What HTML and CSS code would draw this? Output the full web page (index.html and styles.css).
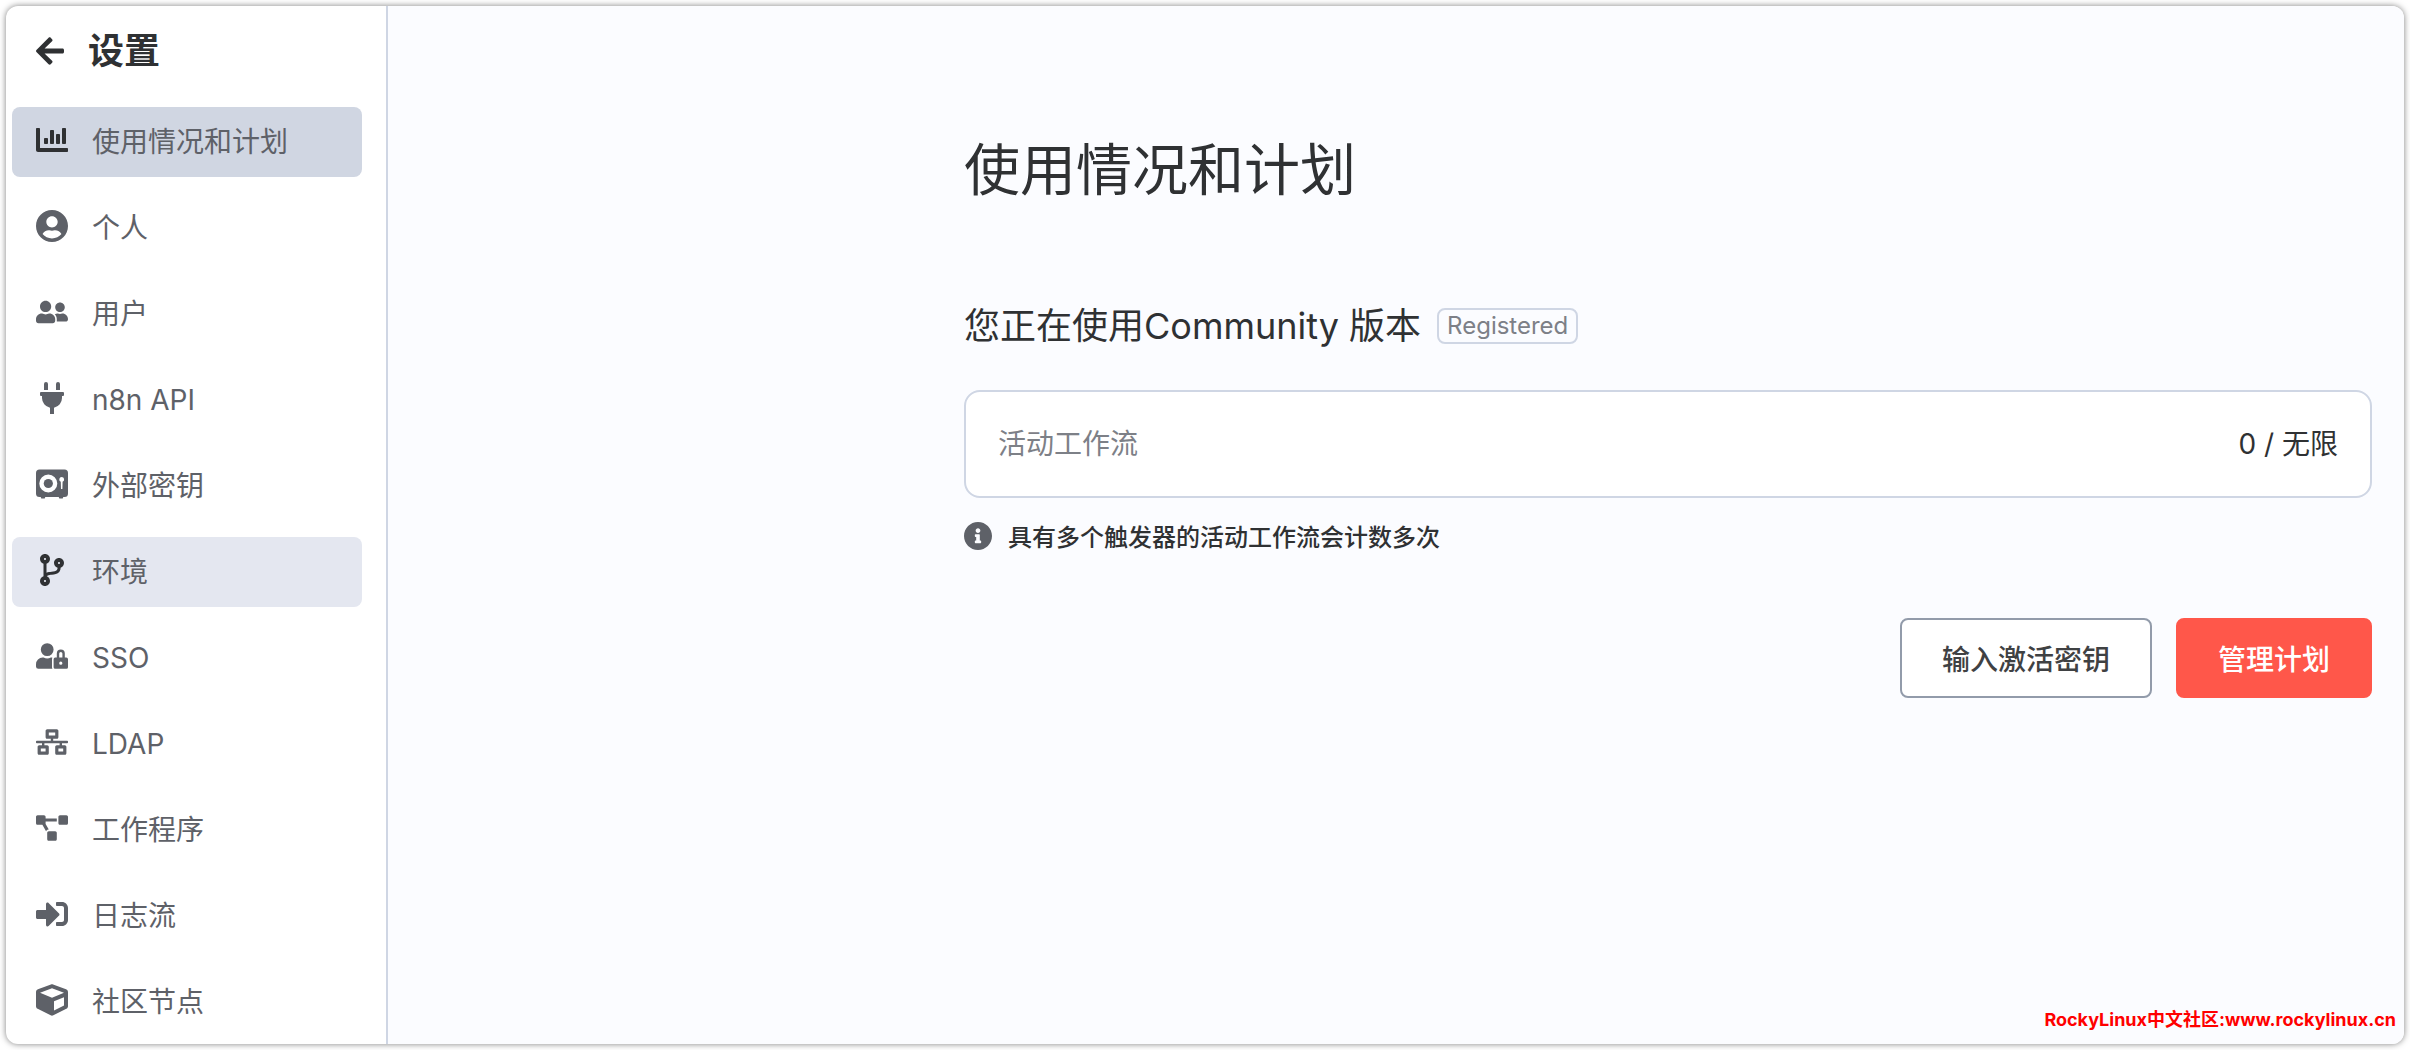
FILE: index.html
```html
<!DOCTYPE html>
<html lang="zh-CN">
<head>
  <meta charset="utf-8">
  <meta name="viewport" content="width=device-width, initial-scale=1">
  <title>设置 - 使用情况和计划</title>
  <link rel="stylesheet" href="styles.css">
</head>
<body>
  <div class="app">
    <aside class="sidebar">
      <a class="back" href="#">
        <svg class="back-icon" viewBox="0 32 448 448" aria-hidden="true"><path d="M257.5 445.1l-22.2 22.2c-9.4 9.4-24.6 9.4-33.9 0L7 273c-9.4-9.4-9.4-24.6 0-33.9L201.4 44.7c9.4-9.4 24.6-9.4 33.9 0l22.2 22.2c9.5 9.5 9.3 25-.4 34.3L136.6 216H424c13.3 0 24 10.7 24 24v32c0 13.3-10.7 24-24 24H136.6l120.5 114.8c9.8 9.3 10 24.8.4 34.3z"/></svg>
        <span class="back-title">设置</span>
      </a>
      <nav class="menu">
        <a class="menu-item is-active" href="#">
          <svg class="menu-icon" viewBox="0 0 512 512" aria-hidden="true"><path d="M332.8 320h38.4c6.4 0 12.8-6.4 12.8-12.8V172.8c0-6.4-6.4-12.8-12.8-12.8h-38.4c-6.4 0-12.8 6.4-12.8 12.8v134.4c0 6.4 6.4 12.8 12.8 12.8zm96 0h38.4c6.4 0 12.8-6.4 12.8-12.8V76.8c0-6.4-6.4-12.8-12.8-12.8h-38.4c-6.4 0-12.8 6.4-12.8 12.8v230.4c0 6.4 6.4 12.8 12.8 12.8zm-288 0h38.4c6.4 0 12.8-6.4 12.8-12.8v-70.4c0-6.4-6.4-12.8-12.8-12.8h-38.4c-6.4 0-12.8 6.4-12.8 12.8v70.4c0 6.4 6.4 12.8 12.8 12.8zm96 0h38.4c6.4 0 12.8-6.4 12.8-12.8V108.8c0-6.4-6.4-12.8-12.8-12.8h-38.4c-6.4 0-12.8 6.4-12.8 12.8v198.4c0 6.4 6.4 12.8 12.8 12.8zM496 384H64V80c0-8.84-7.16-16-16-16H16C7.16 64 0 71.16 0 80v336c0 17.67 14.33 32 32 32h464c8.84 0 16-7.16 16-16v-32c0-8.84-7.16-16-16-16z"/></svg>
          <span>使用情况和计划</span>
        </a>
        <a class="menu-item" href="#">
          <svg class="menu-icon" viewBox="0 8 496 496" aria-hidden="true"><path d="M248 8C111 8 0 119 0 256s111 248 248 248 248-111 248-248S385 8 248 8zm0 96c48.600 0 88 39.400 88 88s-39.400 88-88 88-88-39.400-88-88 39.400-88 88-88zm0 344c-58.700 0-111.300-26.600-146.500-68.200 18.800-35.400 55.600-59.800 98.500-59.800 2.400 0 4.800.4 7.100 1.100 13 4.200 26.600 6.900 40.900 6.900 14.300 0 28-2.700 40.900-6.900 2.300-.7 4.700-1.100 7.100-1.100 42.900 0 79.700 24.400 98.500 59.800C359.300 421.400 306.700 448 248 448z"/></svg>
          <span>个人</span>
        </a>
        <a class="menu-item" href="#">
          <svg class="menu-icon" viewBox="0 0 640 512" aria-hidden="true"><path d="M192 256c61.9 0 112-50.1 112-112S253.9 32 192 32 80 82.1 80 144s50.1 112 112 112zm76.800 32h-8.300c-20.800 10-43.900 16-68.500 16s-47.600-6-68.500-16h-8.300C51.600 288 0 339.600 0 403.200V432c0 26.500 21.500 48 48 48h288c26.500 0 48-21.500 48-48v-28.800c0-63.600-51.600-115.200-115.200-115.200zM480 256c53 0 96-43 96-96s-43-96-96-96-96 43-96 96 43 96 96 96zm48 32h-3.800c-13.900 4.800-28.600 8-44.200 8s-30.300-3.200-44.200-8H432c-20.400 0-39.200 5.900-55.700 15.400 24.400 26.300 39.700 61.200 39.700 99.800v38.400c0 2.200-.5 4.300-.6 6.400H592c26.500 0 48-21.500 48-48 0-61.900-50.100-112-112-112z"/></svg>
          <span>用户</span>
        </a>
        <a class="menu-item" href="#">
          <svg class="menu-icon" viewBox="0 0 384 512" aria-hidden="true"><path d="M320 32a32 32 0 0 0-64 0v96h64zm48 128H16a16 16 0 0 0-16 16v32a16 16 0 0 0 16 16h16v32a160.070 160.070 0 0 0 128 156.800V512h64v-99.200A160.070 160.070 0 0 0 352 256v-32h16a16 16 0 0 0 16-16v-32a16 16 0 0 0-16-16zM128 32a32 32 0 0 0-64 0v96h64z"/></svg>
          <span>n8n API</span>
        </a>
        <a class="menu-item" href="#">
          <svg class="menu-icon" viewBox="0 0 32 32" aria-hidden="true">
            <path fill-rule="evenodd" d="M3.500 1.500h25A3.500 3.500 0 0 1 32 5v20.500a3.500 3.500 0 0 1-3.500 3.500H27.300l-.6 1.500h-3.400l-.6-1.500H9.300l-.6 1.500H5.300L4.700 29H3.500A3.500 3.500 0 0 1 0 25.500V5a3.500 3.500 0 0 1 3.500-3.500zM12.300 6.500a9 9 0 1 0 0 18 9 9 0 0 0 0-18zM25.700 9a2.500 2.500 0 0 0-.9 4.800l.2 7.200h1.400l.2-7.200A2.500 2.500 0 0 0 25.700 9z"/>
            <circle cx="12.300" cy="15.500" r="4.600"/>
          </svg>
          <span>外部密钥</span>
        </a>
        <a class="menu-item is-hovered" href="#">
          <svg class="menu-icon" viewBox="0 0 384 512" aria-hidden="true"><path d="M384 144c0-44.200-35.800-80-80-80s-80 35.800-80 80c0 36.400 24.300 67.100 57.500 76.800-.6 16.100-4.200 28.500-11 36.900-15.400 19.200-49.300 22.400-85.200 25.700-28.200 2.600-57.400 5.400-81.300 16.900v-144c32.500-10.200 56-40.500 56-76.300 0-44.200-35.800-80-80-80S0 35.800 0 80c0 35.800 23.500 66.100 56 76.300v199.300C23.500 365.900 0 396.200 0 432c0 44.200 35.800 80 80 80s80-35.800 80-80c0-34-21.200-63.100-51.200-74.600 3.100-5.200 7.800-9.800 14.900-13.400 16.200-8.200 40.400-10.400 66.100-12.800 42.200-3.900 90-8.400 118.200-43.400 14-17.400 21.100-39.800 21.600-67.900 31.600-10.800 54.400-40.700 54.400-75.900zM80 64c8.800 0 16 7.200 16 16s-7.200 16-16 16-16-7.200-16-16 7.200-16 16-16zm0 384c-8.800 0-16-7.200-16-16s7.200-16 16-16 16 7.200 16 16-7.200 16-16 16zm224-320c8.800 0 16 7.200 16 16s-7.200 16-16 16-16-7.200-16-16 7.200-16 16-16z"/></svg>
          <span>环境</span>
        </a>
        <a class="menu-item" href="#">
          <svg class="menu-icon" viewBox="0 0 640 512" aria-hidden="true"><path d="M224 256A128 128 0 1 0 96 128a128 128 0 0 0 128 128zm96 64a63.080 63.080 0 0 1 8.100-30.500c-4.800-.5-9.500-1.500-14.500-1.500h-16.700a174.080 174.080 0 0 1-145.800 0h-16.700A134.430 134.430 0 0 0 0 422.400V464a48 48 0 0 0 48 48h280.900a63.540 63.540 0 0 1-8.900-32zm288-32h-32v-80a80 80 0 0 0-160 0v80h-32a32 32 0 0 0-32 32v160a32 32 0 0 0 32 32h224a32 32 0 0 0 32-32V320a32 32 0 0 0-32-32zM496 432a32 32 0 1 1 32-32 32 32 0 0 1-32 32zm32-144h-64v-80a32 32 0 0 1 64 0z"/></svg>
          <span>SSO</span>
        </a>
        <a class="menu-item" href="#">
          <svg class="menu-icon" viewBox="0 0 640 512" aria-hidden="true"><path d="M640 264v-16c0-8.840-7.160-16-16-16H344v-40h72c17.670 0 32-14.330 32-32V32c0-17.670-14.330-32-32-32H224c-17.670 0-32 14.330-32 32v128c0 17.670 14.330 32 32 32h72v40H16c-8.840 0-16 7.160-16 16v16c0 8.840 7.160 16 16 16h104v40H64c-17.670 0-32 14.330-32 32v128c0 17.670 14.330 32 32 32h160c17.670 0 32-14.330 32-32V352c0-17.670-14.330-32-32-32h-56v-40h304v40h-56c-17.670 0-32 14.330-32 32v128c0 17.670 14.330 32 32 32h160c17.670 0 32-14.330 32-32V352c0-17.670-14.330-32-32-32h-56v-40h104c8.840 0 16-7.160 16-16zM256 128V64h128v64H256zm-64 320H96v-64h96v64zm352 0h-96v-64h96v64z"/></svg>
          <span>LDAP</span>
        </a>
        <a class="menu-item" href="#">
          <svg class="menu-icon" viewBox="0 0 640 512" aria-hidden="true"><path d="M384 320H256c-17.670 0-32 14.330-32 32v128c0 17.670 14.330 32 32 32h128c17.670 0 32-14.330 32-32V352c0-17.670-14.330-32-32-32zM192 32c0-17.670-14.330-32-32-32H32C14.330 0 0 14.330 0 32v128c0 17.670 14.330 32 32 32h95.720l73.160 128.040C211.980 300.980 232.400 288 256 288h.28L192 175.510V128h224V64H192V32zM608 0H480c-17.670 0-32 14.330-32 32v128c0 17.670 14.330 32 32 32h128c17.670 0 32-14.330 32-32V32c0-17.670-14.330-32-32-32z"/></svg>
          <span>工作程序</span>
        </a>
        <a class="menu-item" href="#">
          <svg class="menu-icon" viewBox="0 0 512 512" aria-hidden="true"><path d="M416 448h-84c-6.600 0-12-5.400-12-12v-40c0-6.600 5.400-12 12-12h84c17.700 0 32-14.300 32-32V160c0-17.700-14.300-32-32-32h-84c-6.600 0-12-5.400-12-12V76c0-6.600 5.400-12 12-12h84c53 0 96 43 96 96v192c0 53-43 96-96 96zm-47-201L201 79c-15-15-41-4.500-41 17v96H24c-13.300 0-24 10.700-24 24v96c0 13.300 10.700 24 24 24h136v96c0 21.500 26 32 41 17l168-168c9.300-9.400 9.300-24.600 0-34z"/></svg>
          <span>日志流</span>
        </a>
        <a class="menu-item" href="#">
          <svg class="menu-icon" viewBox="0 0 512 512" aria-hidden="true"><path d="M239.100 6.300l-208 78c-18.700 7-31.100 25-31.100 45v225.100c0 18.200 10.300 34.800 26.500 42.900l208 104c13.500 6.800 29.400 6.800 42.900 0l208-104c16.300-8.100 26.500-24.800 26.500-42.900V129.300c0-20-12.400-37.900-31.100-44.900l-208-78C262 2.200 250 2.200 239.100 6.300zM256 68.400l192 72v1.100l-192 78-192-78v-1.100l192-72zm32 356V275.500l160-65v133.900l-160 80z"/></svg>
          <span>社区节点</span>
        </a>
      </nav>
    </aside>

    <main class="main">
      <div class="content">
        <h1 class="page-title">使用情况和计划</h1>
        <div class="plan">
          <h2 class="plan-name">您正在使用Community 版本</h2>
          <span class="badge">Registered</span>
        </div>
        <div class="usage">
          <span class="usage-label">活动工作流</span>
          <span class="usage-value">0 / 无限</span>
        </div>
        <p class="note">
          <svg class="note-icon" viewBox="8 8 496 496" aria-hidden="true"><path d="M256 8C119.043 8 8 119.083 8 256c0 136.997 111.043 248 248 248s248-111.003 248-248C504 119.083 392.957 8 256 8zm0 110c23.196 0 42 18.804 42 42s-18.804 42-42 42-42-18.804-42-42 18.804-42 42-42zm56 254c0 6.627-5.373 12-12 12h-88c-6.627 0-12-5.373-12-12v-24c0-6.627 5.373-12 12-12h12v-64h-12c-6.627 0-12-5.373-12-12v-24c0-6.627 5.373-12 12-12h64c6.627 0 12 5.373 12 12v100h12c6.627 0 12 5.373 12 12v24z"/></svg>
          <span>具有多个触发器的活动工作流会计数多次</span>
        </p>
        <div class="actions">
          <button class="button" type="button">输入激活密钥</button>
          <button class="button button-primary" type="button">管理计划</button>
        </div>
      </div>
      <footer class="credit">RockyLinux中文社区:www.rockylinux.cn</footer>
    </main>
  </div>
</body>
</html>
```
FILE: styles.css
```css
:root {
  --text-dark: #2f3133;
  --text-base: #5e6168;
  --text-light: #7d8087;
  --border: #cfd6e4;
  --surface: #fbfcff;
  --primary: #ff574a;
}

*,
*::before,
*::after {
  box-sizing: border-box;
}

body {
  display: flex;
  min-height: 100vh;
  margin: 0;
  padding: 6px;
  background: #fff;
  color: var(--text-dark);
  font-family: Inter, "Noto Sans CJK SC", sans-serif;
  font-size: 28px;
}

.app {
  display: flex;
  flex: 1;
  overflow: hidden;
  border-radius: 12px;
  background: #fff;
  box-shadow: 0 0 6px rgba(0, 0, 0, 0.5);
}

/* Sidebar */

.sidebar {
  flex: none;
  width: 382px;
  padding: 12px 24px 6px 6px;
  border-right: 2px solid var(--border);
}

.back {
  display: flex;
  align-items: center;
  gap: 24px;
  height: 65px;
  padding-left: 24px;
  color: var(--text-dark);
  text-decoration: none;
}

.back-icon {
  width: 28px;
  height: 28px;
  fill: currentColor;
}

.back-title {
  font-size: 36px;
  font-weight: 700;
  line-height: 48px;
}

.menu {
  display: flex;
  flex-direction: column;
  gap: 16px;
  margin-top: 24px;
}

.menu-item {
  display: flex;
  align-items: center;
  gap: 24px;
  height: 70px;
  padding: 0 24px;
  border-radius: 8px;
  color: var(--text-base);
  line-height: 40px;
  text-decoration: none;
}

.menu-icon {
  flex: none;
  width: 32px;
  height: 32px;
  margin-bottom: 4px;
  fill: currentColor;
}

.is-active {
  background: #d0d6e2;
}

.is-hovered {
  background: #e4e7f0;
}

.is-active .menu-icon,
.is-hovered .menu-icon {
  color: var(--text-dark);
}

/* Main area */

.main {
  display: flex;
  flex: 1;
  flex-direction: column;
  justify-content: space-between;
  min-width: 0;
  padding: 128px 32px 4px;
  background: var(--surface);
}

.content {
  width: 100%;
  max-width: 1408px;
  margin-left: auto;
}

.page-title {
  margin: 0 0 96px;
  font-size: 56px;
  font-weight: 400;
  line-height: 72px;
}

.plan {
  display: flex;
  align-items: center;
  gap: 16px;
}

.plan-name {
  margin: 0;
  font-size: 36px;
  font-weight: 400;
  line-height: 48px;
}

.badge {
  padding: 0 8px;
  border: 2px solid var(--border);
  border-radius: 8px;
  color: var(--text-light);
  font-size: 24px;
  line-height: 32px;
}

.usage {
  display: flex;
  align-items: center;
  justify-content: space-between;
  margin-top: 40px;
  padding: 32px;
  border: 2px solid var(--border);
  border-radius: 16px;
  background: #fff;
  line-height: 40px;
}

.usage-label {
  color: var(--text-light);
}

.note {
  display: flex;
  gap: 16px;
  margin: 24px 0 0;
  font-size: 24px;
  font-weight: 500;
  line-height: 32px;
}

.note-icon {
  flex: none;
  width: 28px;
  height: 28px;
  fill: var(--text-base);
}

.actions {
  display: flex;
  flex-wrap: wrap;
  justify-content: flex-end;
  gap: 24px;
  margin-top: 64px;
}

.button {
  height: 80px;
  padding: 0 40px;
  border: 2px solid #929baa;
  border-radius: 8px;
  background: #fff;
  color: #3f4143;
  font: inherit;
  font-weight: 500;
  cursor: pointer;
}

.button-primary {
  border-color: var(--primary);
  background: var(--primary);
  color: #fff;
}

.credit {
  margin-right: -24px;
  color: #f00;
  font-size: 18px;
  font-weight: 700;
  line-height: 40px;
  text-align: right;
}
```
